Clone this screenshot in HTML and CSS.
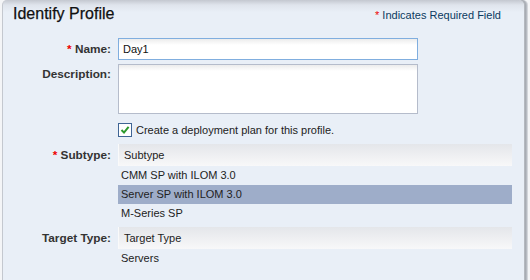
FILE: index.html
```html
<!DOCTYPE html>
<html>
<head>
<meta charset="utf-8">
<link rel="stylesheet" href="styles.css">
</head>
<body>
<div class="panel">
  <div class="head">
    <div class="title">Identify Profile</div>
    <div class="req"><span class="star">*</span> Indicates Required Field</div>
  </div>
  <div class="form">
    <div class="label lbl-input"><span class="star">*</span> Name:</div>
    <div class="ctl"><div class="input name-input">Day1</div></div>

    <div class="label lbl-area">Description:</div>
    <div class="ctl"><div class="input area"></div></div>

    <div class="label"></div>
    <div class="ctl check-row">
      <span class="cbox"><svg width="10" height="10" viewBox="0 0 10 10"><path d="M1.5 5 L4 7.6 L8.6 1.8" fill="none" stroke="#2d9a2d" stroke-width="2"/></svg></span>
      <span>Create a deployment plan for this profile.</span>
    </div>

    <div class="label lbl-list"><span class="star">*</span> Subtype:</div>
    <div class="ctl list">
      <div class="list-head">Subtype</div>
      <div class="item">CMM SP with ILOM 3.0</div>
      <div class="item sel">Server SP with ILOM 3.0</div>
      <div class="item">M-Series SP</div>
    </div>

    <div class="label lbl-list">Target Type:</div>
    <div class="ctl list">
      <div class="list-head">Target Type</div>
      <div class="item">Servers</div>
    </div>
  </div>
</div>
</body>
</html>
```
FILE: styles.css
```css
html, body {
  margin: 0;
  padding: 0;
  background: #f4f5f7;
  font-family: "Liberation Sans", Arial, sans-serif;
  font-size: 11px;
  color: #222;
}
.panel {
  width: 521px;
  height: 290px;
  margin-left: 2px;
  border-left: 1px solid #c4c8cf;
  border-top-left-radius: 5px;
  border-top-right-radius: 5px;
  background: linear-gradient(to bottom, #c4c8d0 0px, #dfe4ec 5px, #e9eff7 12px, #e9eff7 100%);
  box-shadow: 1px 0 0 #b4b8bf, 2px 0 0 #a8acb3, 3px 0 0 #b7bbc2, 4px 0 0 #d3d6db;
  overflow: hidden;
}
.head {
  display: flex;
  justify-content: space-between;
  align-items: flex-start;
  height: 38px;
  padding: 0 23px 0 10px;
}
.title {
  font-size: 16px;
  line-height: 18px;
  color: #111;
  margin-top: 5px;
  -webkit-text-stroke: 0.25px #111;
}
.req {
  margin-top: 8px;
  line-height: 14px;
  color: #0b3a60;
}
.star {
  color: #e00;
}
.form {
  display: grid;
  grid-template-columns: 108px 394px;
  column-gap: 7px;
}
.label {
  text-align: right;
  font-weight: bold;
  font-size: 11.8px;
  line-height: 14px;
  color: #333;
}
.lbl-input { padding-top: 4px; margin-bottom: 4px; }
.lbl-area { padding-top: 3px; }
.lbl-list { padding-top: 4px; }
.input {
  box-sizing: border-box;
  width: 300px;
  background: linear-gradient(to bottom, #ececec 0px, #ffffff 6px);
  border: 1px solid #b5bccb;
  padding: 4px 4px;
  line-height: 13px;
  color: #111;
}
.name-input {
  height: 22px;
  border-color: #80aedf;
  margin-bottom: 4px;
}
.area {
  height: 50px;
}
.check-row {
  display: flex;
  align-items: center;
  gap: 4px;
  height: 14px;
  margin: 9px 0 7px;
  color: #222;
}
.cbox {
  box-sizing: border-box;
  width: 14px;
  height: 14px;
  border: 1px solid #3f6494;
  background: #fff;
  display: flex;
  align-items: center;
  justify-content: center;
}
.list {
  margin-bottom: 4px;
}
.list-head {
  box-sizing: border-box;
  height: 22px;
  line-height: 14px;
  padding: 4px 5px;
  border-left: 1px solid #fafafa;
  background: linear-gradient(to bottom, #e4e6ea, #f8f8f9);
  color: #222;
}
.item {
  height: 19px;
  line-height: 19px;
  padding-left: 3px;
  color: #222;
}
.item.sel {
  background: #9eadc9;
}
```
